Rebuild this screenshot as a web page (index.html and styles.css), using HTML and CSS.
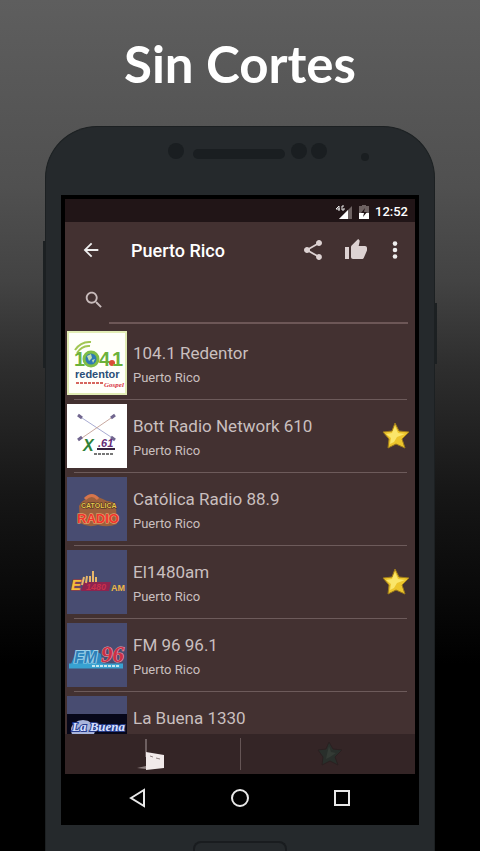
FILE: index.html
```html
<!DOCTYPE html>
<html lang="es">
<head>
    <meta charset="UTF-8">
    <meta name="viewport" content="width=device-width, initial-scale=1.0">
    <title>Sin Cortes</title>
    <link rel="stylesheet" href="styles.css">
</head>
<body>
    <h1>Sin Cortes</h1>
    <main class="phone">
        <!-- Speaker, sensors and camera -->
        <div class="phone-top">
            <svg width="220" height="24" viewBox="0 0 220 24" fill="#1a1e21" aria-hidden="true">
                <circle cx="16" cy="11" r="8"/>
                <rect x="33" y="9" width="92" height="10" rx="5"/>
                <circle cx="139" cy="11" r="8"/>
                <circle cx="159" cy="11" r="8"/>
                <circle cx="205" cy="17" r="4"/>
            </svg>
        </div>

        <div class="screen">
            <div class="app">
                <div class="status-bar">
                    <svg width="18" height="14" viewBox="0 0 18 14" aria-hidden="true">
                        <path d="M4 14 17 1v13z" fill="#6d6262"/>
                        <path d="M4 14 13 5v9z" fill="#fff"/>
                        <path d="M4 6V1L1 4h4M9 1H7v4h2V3" fill="none" stroke="#eee"/>
                    </svg>
                    <svg width="10" height="14" viewBox="0 0 10 14" aria-hidden="true">
                        <path d="M3 0h4v1h3v13H0V1h3z" fill="#6d6262"/>
                        <path d="M0 8h10v6H0z" fill="#fff"/>
                        <path d="M6 3 2 8h3l-1 4 4-5H5z" fill="#231618"/>
                    </svg>
                    <span>12:52</span>
                </div>

                <header class="toolbar">
                    <button type="button" aria-label="Atrás">
                        <svg width="22" height="22" viewBox="0 0 24 24" fill="#eee"><path d="M20 11H7.800l5.600-5.600L12 4l-8 8 8 8 1.400-1.400L7.800 13H20z"/></svg>
                    </button>
                    <h2>Puerto Rico</h2>
                    <button type="button" aria-label="Compartir">
                        <svg width="24" height="24" viewBox="0 0 24 24" fill="#ddd2d2"><path d="M18 16.080c-.76 0-1.440.3-1.960.77L8.910 12.700c.05-.23.09-.46.09-.7s-.04-.47-.09-.7l7.050-4.110c.54.5 1.250.81 2.040.81 1.660 0 3-1.340 3-3s-1.340-3-3-3-3 1.340-3 3c0 .24.04.47.09.7L8.040 9.810C7.500 9.310 6.790 9 6 9c-1.660 0-3 1.340-3 3s1.340 3 3 3c.79 0 1.500-.31 2.040-.81l7.120 4.160c-.05.21-.08.43-.08.65 0 1.610 1.310 2.920 2.920 2.920s2.920-1.310 2.920-2.920-1.310-2.920-2.920-2.920z"/></svg>
                    </button>
                    <button type="button" aria-label="Me gusta">
                        <svg width="24" height="24" viewBox="0 0 24 24" fill="#ddd2d2"><path d="M1 21h4V9H1v12zm22-11c0-1.100-.9-2-2-2h-6.310l.95-4.570.03-.32c0-.41-.17-.79-.44-1.060L14.170 1 7.590 7.590C7.220 7.950 7 8.450 7 9v10c0 1.100.9 2 2 2h9c.83 0 1.540-.5 1.840-1.220l3.020-7.050c.09-.23.14-.47.14-.73v-2z"/></svg>
                    </button>
                    <button type="button" class="more" aria-label="Más opciones">
                        <svg width="22" height="22" viewBox="0 0 24 24" fill="#eee"><circle cx="12" cy="5" r="2.500"/><circle cx="12" cy="12" r="2.500"/><circle cx="12" cy="19" r="2.500"/></svg>
                    </button>
                </header>

                <div class="search">
                    <label for="search" aria-label="Buscar">
                        <svg width="22" height="22" viewBox="0 0 24 24" fill="#c9bcbc"><path d="M15.500 14h-.79l-.28-.27C15.410 12.590 16 11.110 16 9.500 16 5.910 13.090 3 9.500 3S3 5.910 3 9.500 5.910 16 9.500 16c1.610 0 3.090-.59 4.230-1.570l.27.28v.79l5 4.990L20.490 19l-4.990-5zm-6 0C7.010 14 5 11.990 5 9.500S7.010 5 9.500 5 14 7.010 14 9.500 11.990 14 9.500 14z"/></svg>
                    </label>
                    <input type="text" id="search" name="search">
                </div>

                <ul class="stations">
                    <li class="station">
                        <svg class="logo" viewBox="0 0 60 64" aria-hidden="true">
                            <rect width="60" height="64" fill="#fffffa"/>
                            <rect x="1" y="1" width="58" height="62" fill="none" stroke="#e2edb5" stroke-width="2"/>
                            <g fill="none" stroke="#a2c653" stroke-width="2">
                                <path d="M8 19Q14 10 24 11M10 22Q15 14 23 15"/>
                            </g>
                            <text x="7" y="35" class="logo-text" font-size="20" fill="#6cb23a">1</text>
                            <circle cx="24" cy="28" r="7" fill="#2f79b4" stroke="#7fbd46" stroke-width="3"/>
                            <path d="M20 25l4-2 1 4-3 3zM25 29l3-1-2 4z" fill="#c3dfb0"/>
                            <text x="32" y="35" class="logo-text" font-size="20" fill="#6cb23a">4</text>
                            <circle cx="45" cy="32" r="3" fill="#d94e37"/>
                            <text x="45" y="35" class="logo-text" font-size="20" fill="#6cb23a">1</text>
                            <text x="8" y="47" class="logo-text" font-size="11" fill="#2b4f78">redentor</text>
                            <path d="M9 52h27" stroke="#d6665e" stroke-width="2" stroke-dasharray="3 1"/>
                            <text x="37" y="56" class="logo-script" font-size="7" fill="#d8323f">Gospel</text>
                        </svg>
                        <div class="info">
                            <h3>104.1 Redentor</h3>
                            <p>Puerto Rico</p>
                        </div>
                    </li>
                    <li class="station">
                        <svg class="logo" viewBox="0 0 60 64" aria-hidden="true">
                            <rect width="60" height="64" fill="#fff"/>
                            <path d="M12 12 47 35" stroke="#a9acd3"/>
                            <path d="M47 12 12 36" stroke="#c9a9a0"/>
                            <path d="m11 11 4 3M44 14l4-3M11 36l4-3M44 33l4 3" stroke="#71668f" stroke-width="3"/>
                            <text x="16" y="47" class="logo-text" font-size="16" font-style="italic" fill="#2f8139">X</text>
                            <text x="31" y="43" class="logo-text" font-size="11" font-style="italic" fill="#652a75">.61</text>
                            <path d="M30 45h18" stroke="#35213c" stroke-width="2"/>
                            <path d="M27 50h20" stroke="#777" stroke-width="2" stroke-dasharray="3 1"/>
                        </svg>
                        <div class="info">
                            <h3>Bott Radio Network 610</h3>
                            <p>Puerto Rico</p>
                        </div>
                        <button type="button" class="star" aria-label="Favorita">
                            <svg width="28" height="28" viewBox="0 0 28 28"><path d="m13 1 4 8 10 1-7 7 3 9-9-4-8 4 1-9-6-7 9-1z" fill="#ecc52c" stroke="#9c7a1c"/><path d="m13 4 3 7 7 1-8 3-3 5-4 2 1-6-5-4 6-1z" fill="#fae66a"/></svg>
                        </button>
                    </li>
                    <li class="station">
                        <svg class="logo" viewBox="0 0 60 64" aria-hidden="true">
                            <rect width="60" height="64" fill="#484c71"/>
                            <path d="M12 29Q15 23 20 22 24 15 31 20 36 22 40 24 48 24 49 30l1 17q-9 4-19 1-10 3-18-2z" fill="#9c603c"/>
                            <path d="M18 22q7-7 13 0" fill="none" stroke="#d6754b" stroke-width="3"/>
                            <text x="14" y="31" class="logo-text" font-size="7" fill="#e8c64b" stroke="#3d2a20" stroke-width="1" paint-order="stroke">CATOLICA</text>
                            <text x="10" y="46" class="logo-text" font-size="13" fill="#f2352c" stroke="#efb37a" stroke-width="1" paint-order="stroke">RADIO</text>
                        </svg>
                        <div class="info">
                            <h3>Católica Radio 88.9</h3>
                            <p>Puerto Rico</p>
                        </div>
                    </li>
                    <li class="station">
                        <svg class="logo" viewBox="0 0 60 64" aria-hidden="true">
                            <rect width="60" height="64" fill="#484c71"/>
                            <path d="M17 32h27l-2 9H14z" fill="#8e244f"/>
                            <text x="4" y="40" class="logo-text" font-size="15" font-style="italic" fill="#f2bd3b" stroke="#b03932" stroke-width="1" paint-order="stroke">E</text>
                            <path d="m15 35 2-8M19 33l1-7M23 32v-6M26 32v-11M29 32v-5" stroke="#e8b76a" stroke-width="2"/>
                            <text x="19" y="40" class="logo-text" font-size="9" font-style="italic" fill="#c9304b">1480</text>
                            <text x="44" y="41" class="logo-text" font-size="9" fill="#edb746">AM</text>
                        </svg>
                        <div class="info">
                            <h3>El1480am</h3>
                            <p>Puerto Rico</p>
                        </div>
                        <button type="button" class="star" aria-label="Favorita">
                            <svg width="28" height="28" viewBox="0 0 28 28"><path d="m13 1 4 8 10 1-7 7 3 9-9-4-8 4 1-9-6-7 9-1z" fill="#ecc52c" stroke="#9c7a1c"/><path d="m13 4 3 7 7 1-8 3-3 5-4 2 1-6-5-4 6-1z" fill="#fae66a"/></svg>
                        </button>
                    </li>
                    <li class="station">
                        <svg class="logo" viewBox="0 0 60 64" aria-hidden="true">
                            <rect width="60" height="64" fill="#484c71"/>
                            <path d="M3 43 10 27h17l7 4 2 12z" fill="#2d8ac2"/>
                            <text x="7" y="40" class="logo-text" font-size="16" font-style="italic" fill="#2d7fb8" stroke="#9bd0e8" stroke-width="2" paint-order="stroke">FM</text>
                            <text x="34" y="39" class="logo-script" font-size="23" fill="#cd2f45" stroke="#e6a8b3" stroke-width="1" paint-order="stroke">96</text>
                            <path d="M2 43h54" stroke="#38a2d1" stroke-width="5"/>
                            <path d="M25 43h28" stroke="#c2e4ee" stroke-width="2" stroke-dasharray="3 1"/>
                        </svg>
                        <div class="info">
                            <h3>FM 96 96.1</h3>
                            <p>Puerto Rico</p>
                        </div>
                    </li>
                    <li class="station">
                        <svg class="logo" viewBox="0 0 60 64" aria-hidden="true">
                            <rect width="60" height="64" fill="#484c71"/>
                            <rect y="18" width="60" height="26" fill="#070719"/>
                            <ellipse cx="16" cy="34" rx="12" ry="10" fill="#a9b5dc"/>
                            <text x="5" y="35" class="logo-script" font-size="13" fill="#d9e0ff" stroke="#263b8b" stroke-width="2" paint-order="stroke">La Buena</text>
                        </svg>
                        <div class="info">
                            <h3>La Buena 1330</h3>
                        </div>
                    </li>
                </ul>

                <nav class="tabs">
                    <button type="button" aria-label="Emisoras">
                        <svg width="30" height="36" viewBox="0 0 30 36"><path d="M9 3v18" stroke="#a69a9a"/><path d="m0 32 9-2v3z" fill="#8f8282"/><path d="m9 16 18 3v13l-18 2z" fill="#f1eaea"/><path d="m13 20 3 1M19 22l4 1" stroke="#8f8282"/></svg>
                    </button>
                    <button type="button" aria-label="Favoritas">
                        <svg width="28" height="28" viewBox="0 0 28 28"><path d="m15 2 4 7 9 1-7 7 3 8-8-4-8 4 1-8-5-7 8-1z" fill="#292f2b" stroke="#2b2021"/><path d="m15 6 2 6 5 1-6 4-4 2 1-5z" fill="#343b35"/></svg>
                    </button>
                </nav>
            </div>

            <nav class="system-nav">
                <button type="button" aria-label="Volver">
                    <svg width="20" height="20" viewBox="0 0 20 20"><path d="M3 10 16 2v16z"/></svg>
                </button>
                <button type="button" aria-label="Inicio">
                    <svg width="20" height="20" viewBox="0 0 20 20"><circle cx="10" cy="10" r="8"/></svg>
                </button>
                <button type="button" aria-label="Recientes">
                    <svg width="20" height="20" viewBox="0 0 20 20"><rect x="3" y="3" width="14" height="14"/></svg>
                </button>
            </nav>
        </div>

        <div class="phone-bottom"></div>
    </main>
</body>
</html>
```

FILE: styles.css
```css
* {
    box-sizing: border-box;
}

/* Page background */
body {
    display: flex;
    flex-direction: column;
    height: 100vh;
    margin: 0;
    overflow: hidden;
    font-family: Roboto, sans-serif;
    background: linear-gradient(#5e5e5e, #505050 22%, #434343 33%, #2e2e2e 43%, #161616 58%, #000 78%);
}

h1, h2, h3, p, ul {
    margin: 0;
    padding: 0;
    font-weight: normal;
}

h1 {
    padding-top: 32px;
    height: 126px;
    text-align: center;
    font: bold 51px/64px Lato, sans-serif;
    color: #fff;
}

button {
    display: flex;
    align-items: center;
    justify-content: center;
    padding: 0;
    border: none;
    background: none;
    cursor: pointer;
}

svg {
    display: block;
}

/* Phone body */
.phone {
    position: relative;
    display: flex;
    flex: 1;
    flex-direction: column;
    min-height: 0;
    margin: 0 45px;
    padding: 0 15px;
    border: 1px solid #1c2022;
    border-bottom: none;
    border-radius: 52px 52px 0 0;
    background: #25292c;
}

/* Side buttons */
.phone::before,
.phone::after {
    content: "";
    position: absolute;
    width: 3px;
    background: #1c2022;
}

.phone::before {
    top: 114px;
    left: -3px;
    height: 127px;
}

.phone::after {
    top: 176px;
    right: -3px;
    height: 61px;
}

.phone-top {
    display: flex;
    justify-content: center;
    height: 68px;
    padding: 13px 0 0 60px;
}

.phone-bottom {
    align-self: center;
    width: 94px;
    height: 10px;
    margin-top: 16px;
    border: 2px solid #191c1f;
    border-bottom: none;
    border-radius: 8px 8px 0 0;
}

/* Screen */
.screen {
    display: flex;
    flex: 1;
    flex-direction: column;
    min-height: 0;
    padding: 4px 4px 0;
    background: #000;
}

.app {
    display: flex;
    flex: 1;
    flex-direction: column;
    min-height: 0;
    background: #433131;
}

.status-bar {
    display: flex;
    align-items: center;
    justify-content: flex-end;
    gap: 6px;
    height: 23px;
    padding: 2px 7px 0 0;
    background: #211517;
    color: #fff;
    font-size: 13px;
    font-weight: 500;
}

.toolbar {
    display: flex;
    align-items: center;
    height: 56px;
    padding: 0 9px 0 15px;
}

.toolbar h2 {
    flex: 1;
    padding-left: 29px;
    color: #fff;
    font-size: 18px;
    font-weight: 500;
}

.toolbar button + button {
    margin-left: 19px;
}

.toolbar button + .more {
    margin-left: 16px;
}

.search {
    display: flex;
    height: 46px;
    padding: 0 7px 0 18px;
}

.search label {
    padding-top: 11px;
    width: 26px;
}

.search input {
    flex: 1;
    min-width: 0;
    border: none;
    border-bottom: 2px solid #6d5757;
    outline: none;
    background: none;
    color: #fff;
    font: 16px Roboto, sans-serif;
}

/* Station list */
.stations {
    flex: 1;
    min-height: 0;
    padding-top: 3px;
    overflow: hidden;
    list-style: none;
}

.station {
    display: flex;
    height: 73px;
    padding: 4px 5px 0 2px;
    background: linear-gradient(#6d5b5b, #6d5b5b) 9px 100% / calc(100% - 17px) 1px no-repeat;
}

.logo {
    width: 60px;
    height: 64px;
}

.logo-text {
    font-family: "Liberation Sans", sans-serif;
    font-weight: bold;
}

.logo-script {
    font-family: "Liberation Serif", serif;
    font-style: italic;
    font-weight: bold;
}

.info {
    flex: 1;
    padding: 10px 0 0 6px;
}

.info h3 {
    color: #c9bfbf;
    font-size: 17px;
    line-height: 24px;
}

.info p {
    padding-top: 3px;
    color: #c9bfbf;
    font-size: 13px;
    line-height: 20px;
}

.star {
    height: 64px;
}

/* Bottom tabs */
.tabs {
    display: flex;
    align-items: center;
    height: 40px;
    background: #342526;
}

.tabs button {
    flex: 1;
    height: 32px;
}

.tabs button + button {
    border-left: 1px solid #655555;
}

.system-nav {
    display: flex;
    align-items: center;
    justify-content: space-around;
    height: 51px;
    padding: 0 22px 4px;
}

.system-nav svg {
    fill: none;
    stroke: #e8e8e8;
    stroke-width: 2;
}
```
